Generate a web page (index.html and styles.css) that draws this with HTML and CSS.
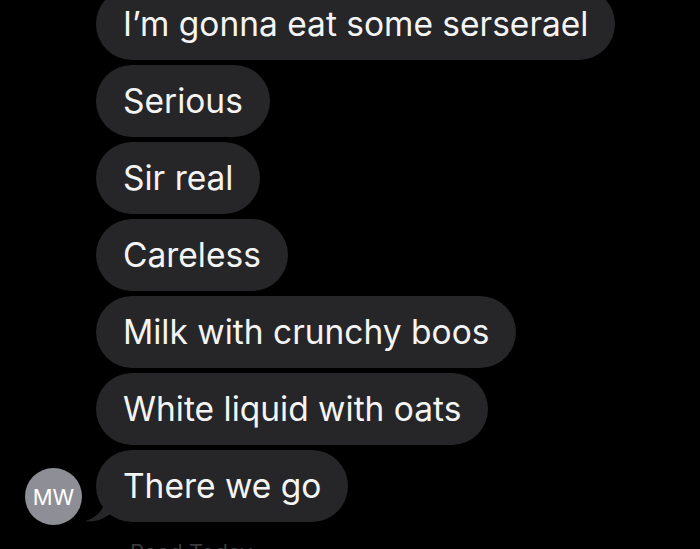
FILE: index.html
```html
<!DOCTYPE html>
<html>
<head>
<meta charset="utf-8">
<link rel="stylesheet" href="styles.css">
</head>
<body>
<div class="thread">
  <div class="row"><div class="slot"></div><div class="bubble">I’m gonna eat some serserael</div></div>
  <div class="row"><div class="slot"></div><div class="bubble">Serious</div></div>
  <div class="row"><div class="slot"></div><div class="bubble">Sir real</div></div>
  <div class="row"><div class="slot"></div><div class="bubble">Careless</div></div>
  <div class="row"><div class="slot"></div><div class="bubble">Milk with crunchy boos</div></div>
  <div class="row"><div class="slot"></div><div class="bubble">White liquid with oats</div></div>
  <div class="row">
    <div class="slot"><div class="avatar">MW</div></div>
    <div class="bubble tailed">There we go
      <svg class="tail" width="26" height="22" viewBox="0 0 26 22"><path d="M19 0 C19 9 14 16 0 21.5 C9 22 16 20 22 16 L26 14 L26 0 Z" fill="#262628"/></svg>
    </div>
  </div>
  <div class="status">Read Today</div>
</div>
</body>
</html>
```
FILE: styles.css
```css
html, body {
  margin: 0;
  padding: 0;
  background: #000;
  height: 100%;
  overflow: hidden;
}
.thread {
  display: flex;
  flex-direction: column;
  gap: 5px;
  padding-left: 25px;
  margin-top: -12px;
  font-family: Inter, "Liberation Sans", Arial, sans-serif;
}
.row {
  display: flex;
  align-items: flex-end;
  gap: 14px;
}
.slot {
  width: 57px;
  flex: none;
}
.bubble {
  position: relative;
  background: #262628;
  color: #f4f4f4;
  font-size: 33.5px;
  line-height: 42px;
  padding: 15px 27px;
  border-radius: 36px;
  white-space: nowrap;
}
.tail {
  position: absolute;
  left: -11px;
  bottom: 0;
}
.avatar {
  width: 57px;
  height: 57px;
  border-radius: 50%;
  background: #8e8f96;
  color: #fff;
  font-size: 22px;
  display: flex;
  align-items: center;
  justify-content: center;
  margin-bottom: -3px;
}
.status {
  margin-top: 12px;
  padding-left: 105px;
  color: #3a3a3c;
  font-size: 22px;
}
```
